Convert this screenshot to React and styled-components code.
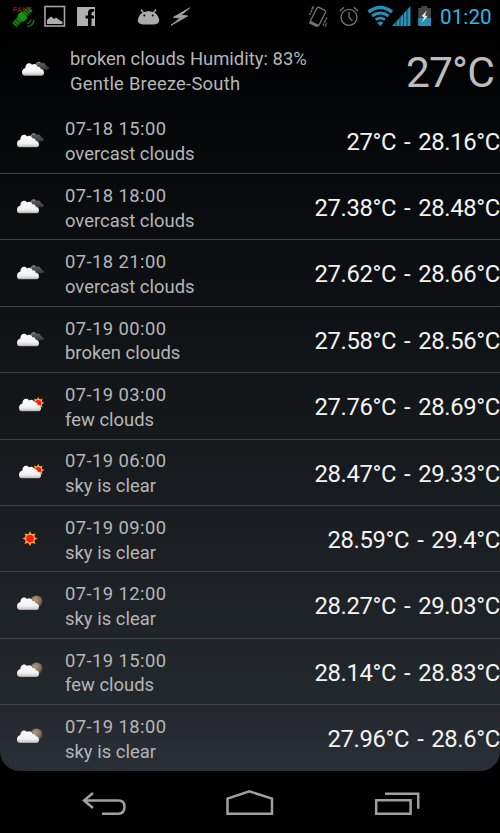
import React from 'react';
import styled, { createGlobalStyle } from 'styled-components';

const GlobalStyle = createGlobalStyle`
  body { margin: 0; background: #000; font-family: Roboto, "Liberation Sans", sans-serif; }
`;

const Screen = styled.div`
  width: 500px;
  height: 833px;
  overflow: hidden;
  display: flex;
  flex-direction: column;
  background: #000;
`;

const StatusBar = styled.header`
  height: 34px;
  flex: none;
  display: flex;
  justify-content: space-between;
`;

const StatusIcons = styled.svg`
  display: block;
  flex: none;
`;

const StatusRight = styled.div`
  display: flex;
`;

const Clock = styled.span`
  width: 60px;
  color: #33b5e5;
  font-size: 20.6px;
  line-height: 34px;
  letter-spacing: 0.1px;
  white-space: nowrap;
`;

const Panel = styled.main`
  height: 737px;
  box-sizing: border-box;
  flex: none;
  border-radius: 20px;
  overflow: hidden;
  background: linear-gradient(180deg, #000 0%, #06080a 15%, #14171a 50%, #23282c 90%, #2a2e36 100%);
`;

const Current = styled.section`
  height: 73.6px;
  display: flex;
  padding-right: 6px;
`;

const Row = styled.section`
  height: 66.4px;
  box-sizing: border-box;
  display: flex;
  border-bottom: 1px solid #404346;
`;

const Sky = styled.svg`
  display: block;
  flex: none;
  width: ${(p) => p.$width}px;
  height: 66px;
`;

const Details = styled.div`
  flex: 1;
  padding-top: ${(p) => p.$top}px;
  color: #b6b6b6;
  font-size: 18.4px;
  line-height: 24.8px;
  white-space: nowrap;
`;

const Line = styled.div`
  letter-spacing: ${(p) => p.$spacing || 0.02}px;
`;

const CurrentTemp = styled.div`
  color: #bdbdbd;
  font-size: 42.5px;
  letter-spacing: -0.8px;
  line-height: 77px;
  white-space: nowrap;
`;

const Range = styled.div`
  color: #f4f4f4;
  font-size: 23.8px;
  letter-spacing: -0.35px;
  word-spacing: 2.4px;
  line-height: 69px;
  white-space: nowrap;
`;

const NavBar = styled.nav`
  flex: 1;
  display: flex;
  justify-content: center;
`;

const Cloud = () => (
  <path
    d="M20 39.3C17.5 39.3 17 37.5 17 35.7C17 33.2 18.8 31.8 20.4 31.5C20.3 28.7 22 26.8 24.1 26.8C25.5 26.8 26.4 27.3 27 28.4C28.9 27 31.8 27.8 32.4 30.4C34.4 29.9 35.6 31.4 35.7 32.7C37.8 32.9 39 34.3 39 36.2C39 38.4 37.9 39.3 36 39.3Z"
    fill="url(#cloud)"
  />
);

const rays = (n, cx, cy, outer, inner) =>
  Array.from({ length: n * 2 }, (_, i) => {
    const r = i % 2 ? inner : outer;
    const a = (i * Math.PI) / n;
    return `${cx + r * Math.sin(a)},${cy - r * Math.cos(a)}`;
  }).join(' ');

const Sun = ({ x, y, size }) => (
  <g>
    <polygon points={rays(8, x, y, size, size * 0.58)} fill="#ffa020" />
    <circle cx={x} cy={y} r={size * 0.64} fill="#ffb45c" />
    <circle cx={x} cy={y} r={size * 0.5} fill="#ff1a08" />
  </g>
);

const WeatherIcon = ({ kind, width = 65, shift = 0, drop = 0 }) => (
  <Sky $width={width} viewBox={`${-shift} ${-drop} ${width} 66`}>
    <defs>
      <linearGradient id="cloud" x1="0" y1="26" x2="0" y2="40" gradientUnits="userSpaceOnUse">
        <stop offset="0" stopColor="#fff" />
        <stop offset="0.65" stopColor="#f2f2f2" />
        <stop offset="0.85" stopColor="#d2d2d2" />
        <stop offset="1" stopColor="#888" />
      </linearGradient>
      <linearGradient id="rear" x1="0" y1="25" x2="0" y2="34" gradientUnits="userSpaceOnUse">
        <stop offset="0" stopColor="#686868" />
        <stop offset="1" stopColor="#343434" />
      </linearGradient>
      <radialGradient id="moon" cx="0.4" cy="0.35" r="0.65">
        <stop offset="0" stopColor="#b09a86" />
        <stop offset="0.7" stopColor="#846b58" />
        <stop offset="1" stopColor="#4f4138" />
      </radialGradient>
    </defs>
    {kind === 'clouds' && (
      <>
        <path d="M30 29.3C30.3 26.5 33 24.8 35.5 25.8L36.8 27C38.5 25.9 40.3 26.7 40.6 28.5L44.2 31.5C43.7 33 42 33.5 39 33.3L34.5 32.5Z" fill="url(#rear)" />
        <path d="M30.7 28.5C31.4 26.1 33.3 25.3 35 26.2" fill="none" stroke="#999" strokeWidth="1" />
        <Cloud />
      </>
    )}
    {kind === 'few' && (
      <>
        <Sun x={38.2} y={30} size={6.2} />
        <g transform="translate(2 -1)"><Cloud /></g>
      </>
    )}
    {kind === 'sun' && <Sun x={30} y={32.6} size={7.7} />}
    {kind === 'moon' && (
      <>
        <circle cx="36.5" cy="29.6" r="6" fill="url(#moon)" />
        <g transform="translate(0 -1.4)"><Cloud /></g>
      </>
    )}
  </Sky>
);

const forecast = [
  ['07-18 15:00', 'overcast clouds', '27°C - 28.16°C', 'clouds'],
  ['07-18 18:00', 'overcast clouds', '27.38°C - 28.48°C', 'clouds'],
  ['07-18 21:00', 'overcast clouds', '27.62°C - 28.66°C', 'clouds'],
  ['07-19 00:00', 'broken clouds', '27.58°C - 28.56°C', 'clouds'],
  ['07-19 03:00', 'few clouds', '27.76°C - 28.69°C', 'few'],
  ['07-19 06:00', 'sky is clear', '28.47°C - 29.33°C', 'few'],
  ['07-19 09:00', 'sky is clear', '28.59°C - 29.4°C', 'sun'],
  ['07-19 12:00', 'sky is clear', '28.27°C - 29.03°C', 'moon'],
  ['07-19 15:00', 'few clouds', '28.14°C - 28.83°C', 'moon'],
  ['07-19 18:00', 'sky is clear', '27.96°C - 28.6°C', 'moon'],
];

const FakeLabel = styled.text`
  font: 700 7px "Liberation Sans", sans-serif;
  fill: #86190e;
`;

const Notifications = () => (
  <StatusIcons width="200" height="34">
    <g transform="rotate(-45 22 17)">
      <rect x="11" y="14" width="8" height="6" fill="#138213" />
      <path d="M13 14v6M16 14v6" stroke="#063b06" strokeWidth="1" />
      <rect x="19" y="12.5" width="7" height="9" rx="2" fill="#18911b" />
      <rect x="26" y="14" width="8" height="6" fill="#138213" />
      <path d="M28.5 14v6M31 14v6" stroke="#063b06" strokeWidth="1" />
    </g>
    <path d="M27 23.500q3.500-.5 4-4M27 26.500q6.500 0 7-7" fill="none" stroke="#17801b" strokeWidth="1.200" />
    <FakeLabel x="12.800" y="11.800" textLength="19">FAKE</FakeLabel>
    <rect x="45" y="6.500" width="19.500" height="19.500" fill="none" stroke="#a4a4a4" strokeWidth="1.600" />
    <path d="M47 24v-4l4-3.500 3 2.500 2-1.500 4 3 2.500 1V24z" fill="#adadad" />
    <path fillRule="evenodd" d="M77 7h18v19h-3.500v-7.500h2.500v-3h-2.500v-2q0-1.700 1.500-1.700h1.200v-2.800h-2.700q-3.500 0-3.500 4v2.500h-2.400v3h2.400V26H77z" fill="#b0b0b0" />
    <path d="M141 9.500l3 4M156 9.500l-3 4" stroke="#ababab" strokeWidth="1.300" />
    <path d="M137.700 20q1-8 10.800-9q9.800 1 10.800 9q-.5 4.400-5 4.400H143q-5 0-5.300-4.400z" fill="#ababab" />
    <circle cx="144.300" cy="15.600" r="1" fill="#000" />
    <circle cx="152.700" cy="15.600" r="1" fill="#000" />
    <path d="M189.500 8L173.500 17.300l7 .8-9.500 7.200L187.500 16l-6.500-.8z" fill="#a0a0a0" stroke="#a0a0a0" />
  </StatusIcons>
);

const SystemIcons = () => (
  <StatusIcons width="140" height="34" viewBox="300 0 140 34">
    <g fill="none" stroke="#737373" strokeWidth="1.300">
      <rect x="313.200" y="8" width="9.600" height="17" rx="1.500" transform="rotate(27 318 16.500)" />
      <path d="M309.500 21.800l8.300 4.200" strokeWidth="3" />
      <path d="M309.500 15l4-8M311.800 9l1.600-3.300M323 25.500l4-8M325 26.500l1.800-3.500" strokeDasharray="2.500 .7" />
      <circle cx="349" cy="17.300" r="8" />
      <path d="M349 12v5.500l3.500 3.200M340 11l4-3.800M358 11l-4-3.800" />
    </g>
    <g fill="none" stroke="#288fb5">
      <path d="M368.500 12q12-9 23.500 0" strokeWidth="3.500" />
      <path d="M372 16q8.500-6 16.500 0" strokeWidth="3" />
      <path d="M375.500 19.700q5-3.200 9.500 0" strokeWidth="2.700" />
    </g>
    <path d="M377.300 22.500q3-1.800 6 0l-3 3.800z" fill="#288fb5" />
    <path d="M410.500 6v20H392z" fill="#288fb5" />
    <path d="M396 20v7M400 15v12M403.500 12v15M407 8v19" stroke="#062c3a" strokeWidth=".8" />
    <path d="M418.300 8h3V6h6v2h3.700v18h-12.700z" fill="#464646" />
    <path d="M418.300 18H431v8h-12.700z" fill="#288fb5" />
    <path d="M427 10.500l-5.500 5.500 2.500 1.300-2 5.200 5.500-6-2.500-1.300z" fill="#e4e4e4" />
  </StatusIcons>
);

export default function App() {
  return (
    <Screen>
      <GlobalStyle />
      <StatusBar>
        <Notifications />
        <StatusRight>
          <SystemIcons />
          <Clock>01:20</Clock>
        </StatusRight>
      </StatusBar>
      <Panel>
        <Current>
          <WeatherIcon kind="clouds" width={70} shift={5} drop={2.4} />
          <Details $top={13}>
            <Line>broken clouds Humidity: 83%</Line>
            <Line $spacing={0.24}>Gentle Breeze-South</Line>
          </Details>
          <CurrentTemp>27°C</CurrentTemp>
        </Current>
        {forecast.map(([time, sky, range, kind]) => (
          <Row key={time}>
            <WeatherIcon kind={kind} />
            <Details $top={9.9}>
              <Line $spacing={0.42}>{time}</Line>
              <Line>{sky}</Line>
            </Details>
            <Range>{range}</Range>
          </Row>
        ))}
      </Panel>
      <NavBar>
        <svg width="500" height="62" viewBox="0 771 500 62" fill="none" stroke="#a0a0a0" strokeWidth="2.500">
          <path d="M93 793l-9 7.500 9 7.500M84 800.500h34.500q6 0 6 6.500t-6 6.800H102" />
          <path d="M227.500 813.800v-15.200l22-7.200 22.500 7.200v15.200z" />
          <path d="M376.200 800.300h34.400v13.500h-34.400zM385 793.700h33.200v15" />
        </svg>
      </NavBar>
    </Screen>
  );
}
